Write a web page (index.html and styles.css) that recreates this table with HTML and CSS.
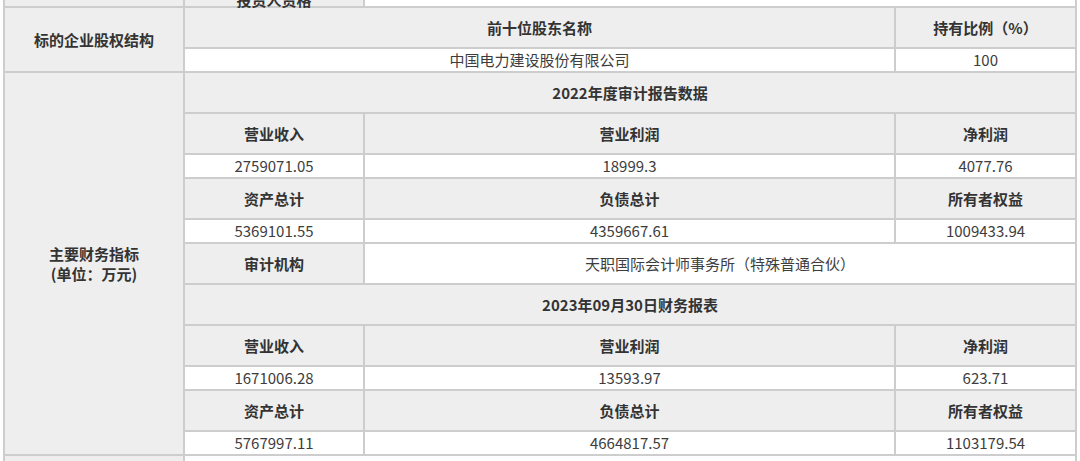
FILE: index.html
```html
<!DOCTYPE html>
<html lang="zh-CN">
<head>
<meta charset="utf-8">
<title>标的企业信息</title>
<link rel="stylesheet" href="styles.css">
</head>
<body>
<div class="page">
<table class="info">
<colgroup><col class="c1"><col class="c2"><col class="c3"><col class="c4"></colgroup>
<tr class="r-h"><td class="lbl"></td><td class="lbl clip">投资人资格</td><td colspan="2"></td></tr>
<tr class="r-h"><td rowspan="2" class="lbl">标的企业股权结构</td><td colspan="2" class="lbl">前十位股东名称</td><td class="lbl">持有比例（%）</td></tr>
<tr class="r-v"><td colspan="2">中国电力建设股份有限公司</td><td>100</td></tr>
<tr class="r-h"><td rowspan="11" class="lbl">主要财务指标<br>(单位：万元)</td><td colspan="3" class="lbl">2022年度审计报告数据</td></tr>
<tr class="r-h"><td class="lbl">营业收入</td><td class="lbl">营业利润</td><td class="lbl">净利润</td></tr>
<tr class="r-v"><td>2759071.05</td><td>18999.3</td><td>4077.76</td></tr>
<tr class="r-h"><td class="lbl">资产总计</td><td class="lbl">负债总计</td><td class="lbl">所有者权益</td></tr>
<tr class="r-v"><td>5369101.55</td><td>4359667.61</td><td>1009433.94</td></tr>
<tr class="r-h"><td class="lbl">审计机构</td><td colspan="2">天职国际会计师事务所（特殊普通合伙）</td></tr>
<tr class="r-h"><td colspan="3" class="lbl">2023年09月30日财务报表</td></tr>
<tr class="r-h"><td class="lbl">营业收入</td><td class="lbl">营业利润</td><td class="lbl">净利润</td></tr>
<tr class="r-v"><td>1671006.28</td><td>13593.97</td><td>623.71</td></tr>
<tr class="r-h"><td class="lbl">资产总计</td><td class="lbl">负债总计</td><td class="lbl">所有者权益</td></tr>
<tr class="r-v"><td>5767997.11</td><td>4664817.57</td><td>1103179.54</td></tr>
<tr class="r-h"><td class="lbl"></td><td colspan="3"></td></tr>
</table>
</div>
</body>
</html>
```

FILE: styles.css
```css
html, body {
  margin: 0;
  padding: 0;
  background: #ffffff;
}

body {
  font-family: "Noto Sans CJK SC", "Microsoft YaHei", sans-serif;
  font-size: 15px;
  color: #3d3d3d;
}

.page {
  height: 461px;
  overflow: hidden;
  padding-left: 3px;
}

.info {
  border-collapse: collapse;
  table-layout: fixed;
  width: 1072px;
  margin-top: -35px;
}

.c1 { width: 180px; }
.c2 { width: 180px; }
.c3 { width: 531px; }
.c4 { width: 181px; }

.info td {
  border: 2px solid #cdcdcd;
  padding: 0 4px;
  text-align: center;
  vertical-align: middle;
  background: #ffffff;
  line-height: 20px;
  white-space: nowrap;
}

.info td.lbl {
  background: #eeeeee;
  font-weight: bold;
  color: #333333;
}

.info td.clip {
  vertical-align: bottom;
  line-height: 12px;
  padding-bottom: 0;
}

.r-h { height: 41px; }
.r-v { height: 24px; }
```
